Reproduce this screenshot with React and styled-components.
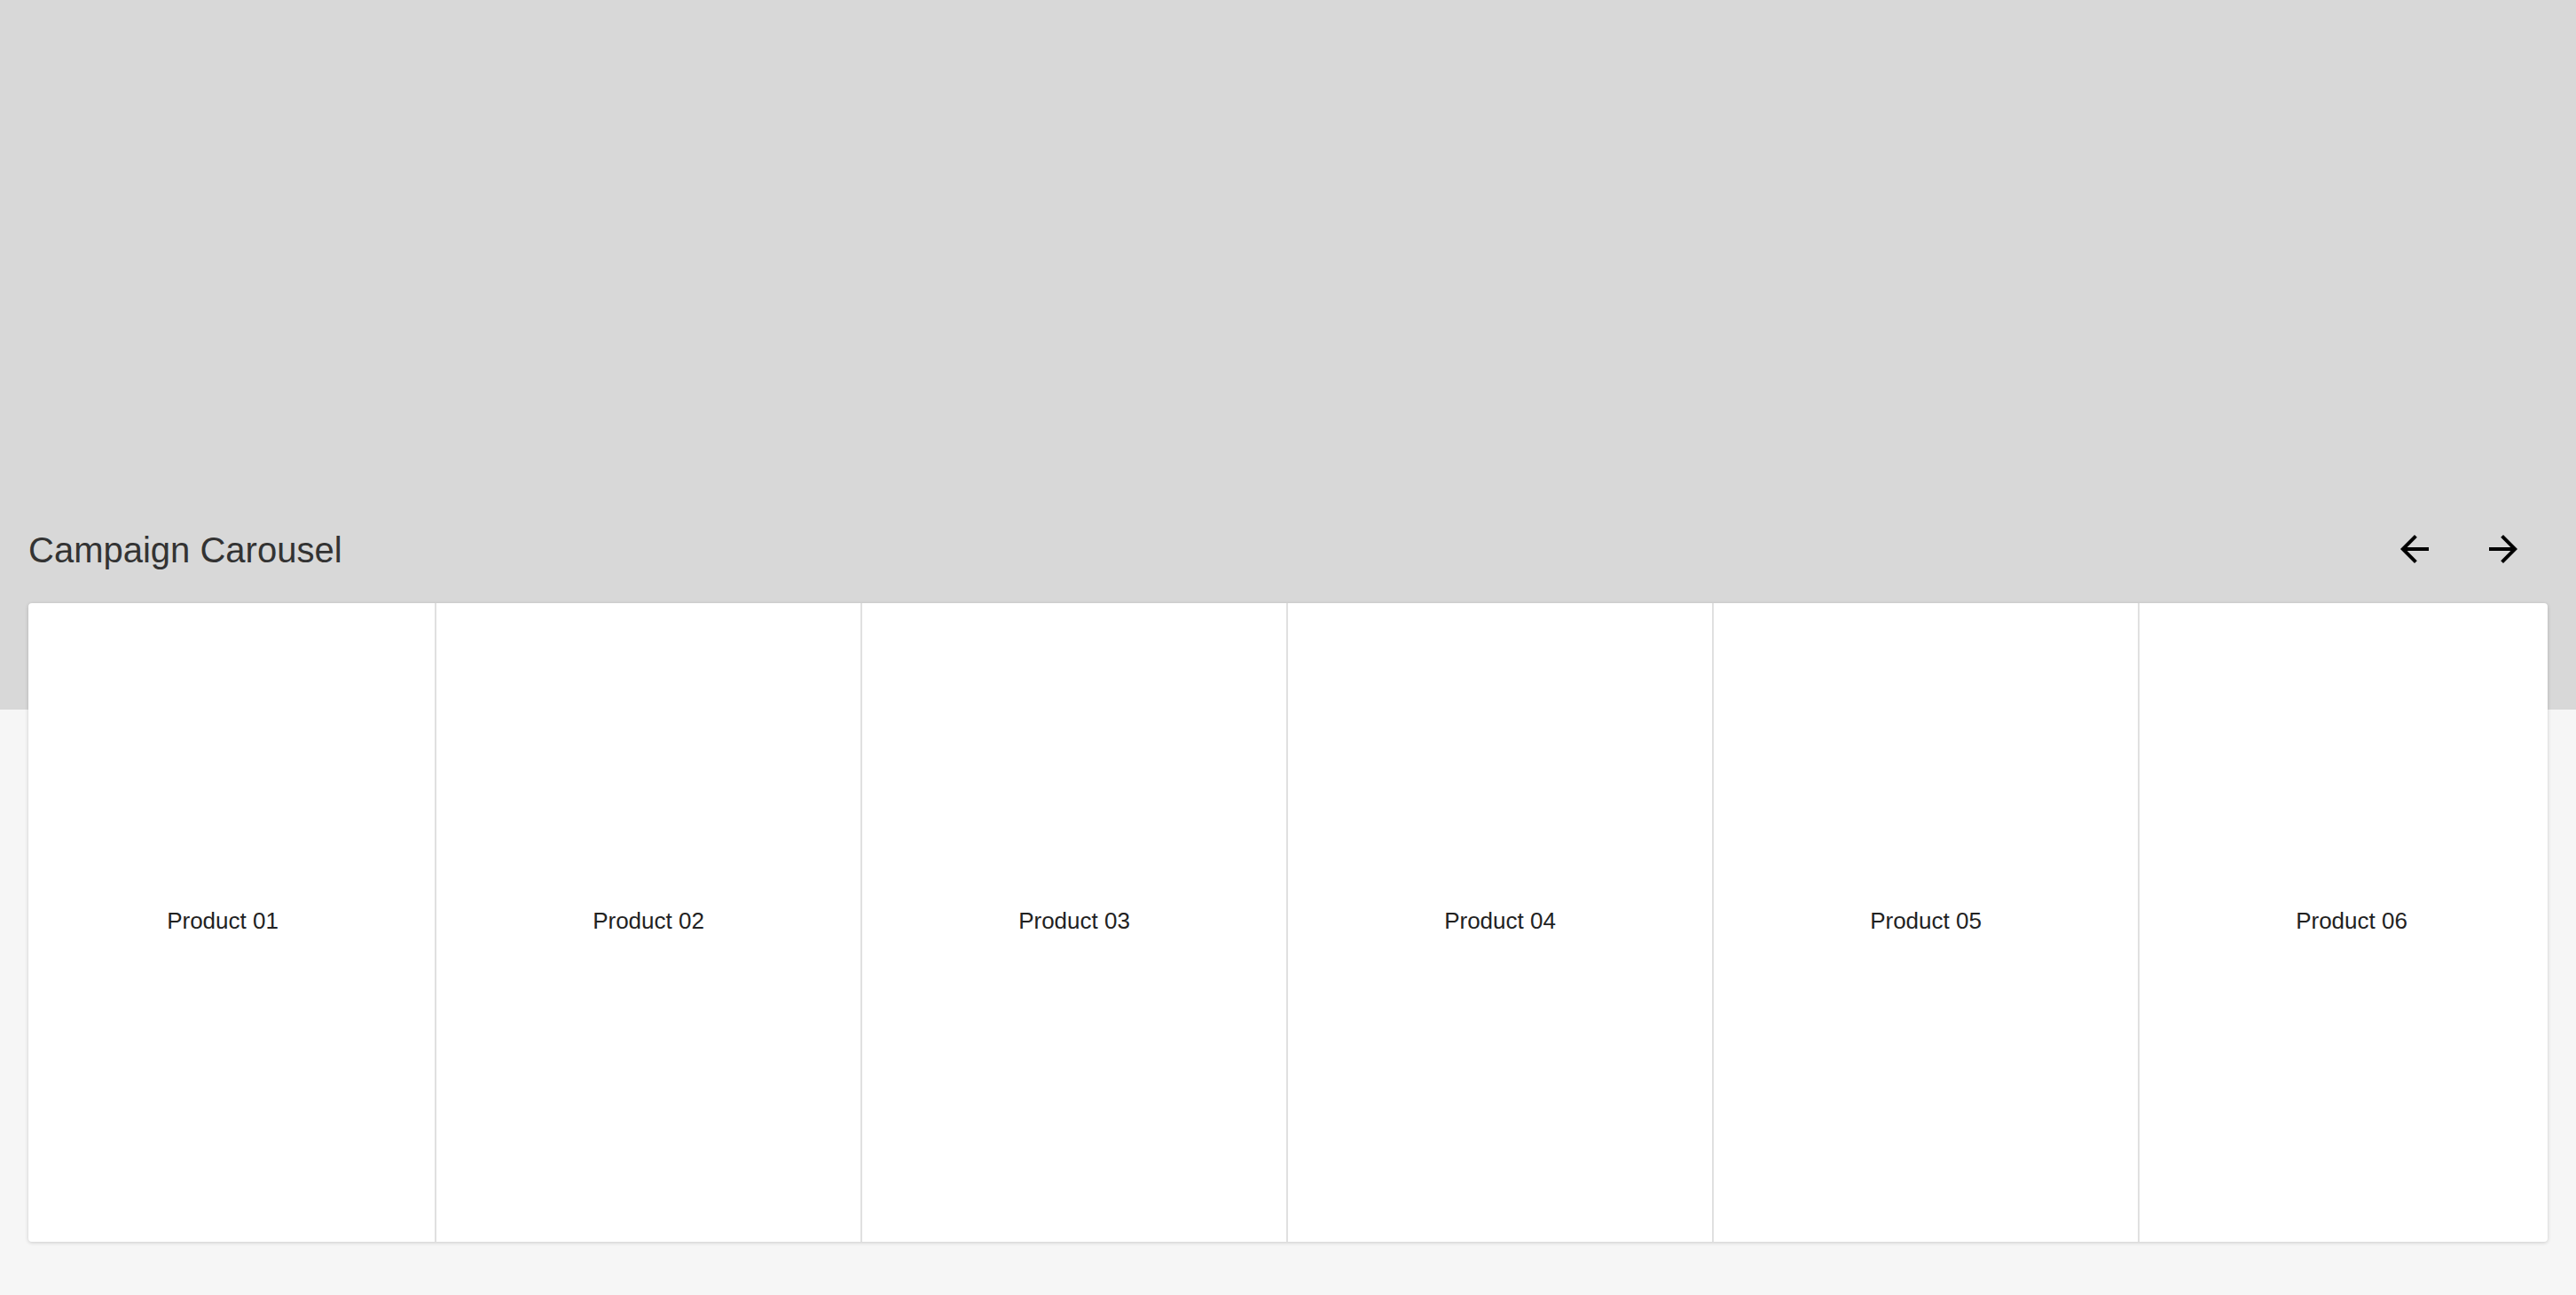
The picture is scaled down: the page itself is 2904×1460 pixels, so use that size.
import React from "react";
import styled, { createGlobalStyle } from "styled-components";

const GlobalStyle = createGlobalStyle`
  html, body {
    margin: 0;
    padding: 0;
  }
  body {
    background: #f6f6f6;
    font-family: "Liberation Sans", Arial, sans-serif;
  }
`;

const Page = styled.div`
  min-height: 1460px;
  box-sizing: border-box;
  padding: 596px 32px 60px;
  background: linear-gradient(to bottom, #d8d8d8 0, #d8d8d8 800px, #f6f6f6 800px);
`;

const HeaderRow = styled.div`
  display: flex;
  align-items: center;
  justify-content: space-between;
  height: 48px;
`;

const Title = styled.h1`
  margin: 0;
  font-size: 40px;
  font-weight: 400;
  color: #333;
  line-height: normal;
`;

const Controls = styled.div`
  display: flex;
  align-items: center;
  margin-top: -2px;
`;

const ArrowButton = styled.button`
  width: 100px;
  height: 48px;
  padding: 0;
  border: none;
  background: transparent;
  display: flex;
  align-items: center;
  justify-content: center;
  cursor: pointer;
  color: #000;
`;

const Card = styled.div`
  margin-top: 36px;
  height: 720px;
  background: #fff;
  border-radius: 4px;
  box-shadow: 0 1px 4px rgba(0, 0, 0, 0.18);
  overflow: hidden;
`;

const Track = styled.div`
  display: flex;
  height: 100%;
  margin-left: ${(p) => -p.$offset}px;
`;

const Slide = styled.div`
  flex: 0 0 480px;
  box-sizing: border-box;
  border-right: 2px solid #e0e0e0;
  padding-bottom: 3px;
  display: flex;
  align-items: center;
  justify-content: center;
  font-size: 26px;
  color: #222;
`;

const Arrow = ({ dir }) => (
  <svg width="48" height="48" viewBox="0 0 24 24" fill="currentColor">
    {dir === "left" ? (
      <path d="M20 11H7.83l5.59-5.59L12 4l-8 8 8 8 1.41-1.41L7.83 13H20v-2z" />
    ) : (
      <path d="M12 4l-1.41 1.41L16.17 11H4v2h12.17l-5.58 5.59L12 20l8-8z" />
    )}
  </svg>
);

const products = ["Product 01", "Product 02", "Product 03", "Product 04", "Product 05", "Product 06"];

export default function App() {
  return (
    <>
      <GlobalStyle />
      <Page>
        <HeaderRow>
          <Title>Campaign Carousel</Title>
          <Controls>
            <ArrowButton aria-label="Previous">
              <Arrow dir="left" />
            </ArrowButton>
            <ArrowButton aria-label="Next">
              <Arrow dir="right" />
            </ArrowButton>
          </Controls>
        </HeaderRow>
        <Card>
          <Track $offset={20}>
            {products.map((p) => (
              <Slide key={p}>{p}</Slide>
            ))}
          </Track>
        </Card>
      </Page>
    </>
  );
}
